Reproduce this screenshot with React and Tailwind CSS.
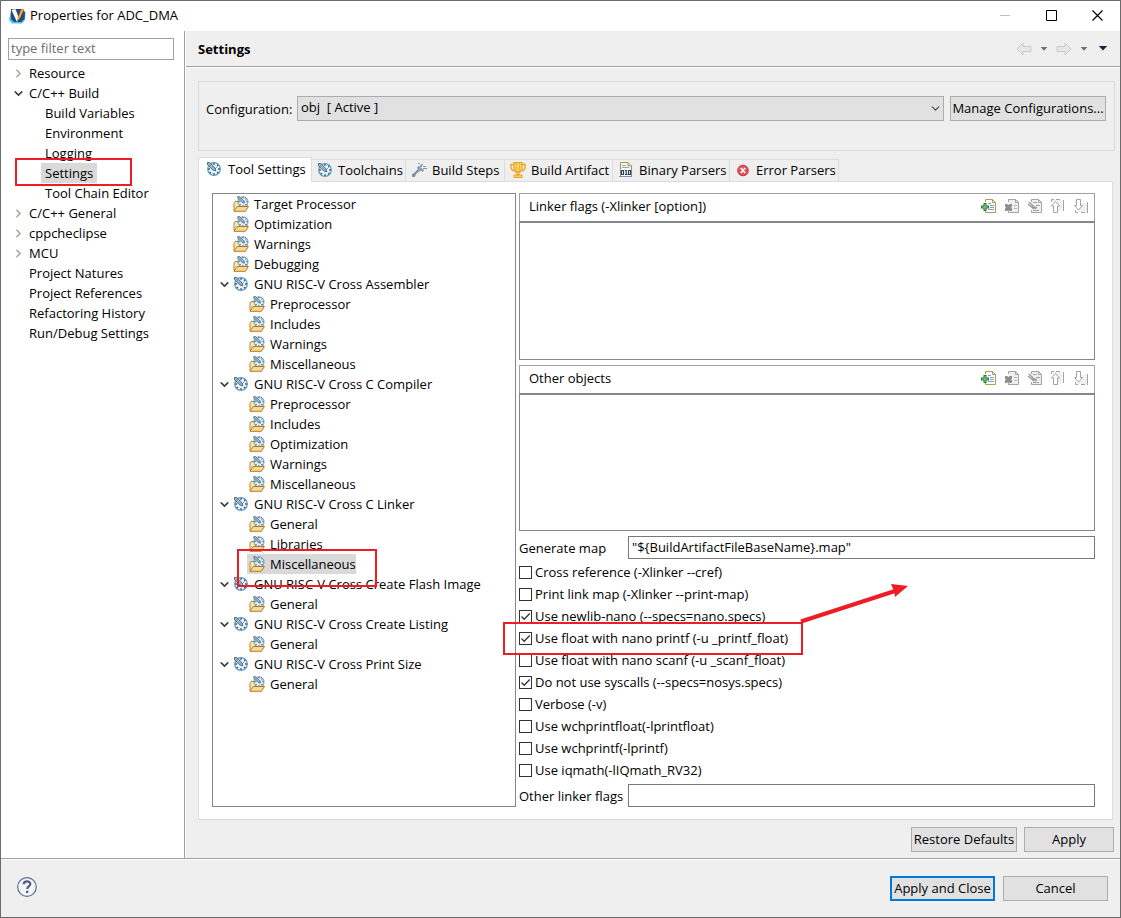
import { ChevronDown, ChevronRight } from "lucide-react";

const pages = [
  { label: "Resource", arrow: "closed" },
  { label: "C/C++ Build", arrow: "open" },
  { label: "Build Variables", child: true },
  { label: "Environment", child: true },
  { label: "Logging", child: true },
  { label: "Settings", child: true, selected: true },
  { label: "Tool Chain Editor", child: true },
  { label: "C/C++ General", arrow: "closed" },
  { label: "cppcheclipse", arrow: "closed" },
  { label: "MCU", arrow: "closed" },
  { label: "Project Natures" },
  { label: "Project References" },
  { label: "Refactoring History" },
  { label: "Run/Debug Settings" },
];

const tools = [
  { label: "Target Processor" },
  { label: "Optimization" },
  { label: "Warnings" },
  { label: "Debugging" },
  { label: "GNU RISC-V Cross Assembler", group: true },
  { label: "Preprocessor", child: true },
  { label: "Includes", child: true },
  { label: "Warnings", child: true },
  { label: "Miscellaneous", child: true },
  { label: "GNU RISC-V Cross C Compiler", group: true },
  { label: "Preprocessor", child: true },
  { label: "Includes", child: true },
  { label: "Optimization", child: true },
  { label: "Warnings", child: true },
  { label: "Miscellaneous", child: true },
  { label: "GNU RISC-V Cross C Linker", group: true },
  { label: "General", child: true },
  { label: "Libraries", child: true },
  { label: "Miscellaneous", child: true, selected: true },
  { label: "GNU RISC-V Cross Create Flash Image", group: true },
  { label: "General", child: true },
  { label: "GNU RISC-V Cross Create Listing", group: true },
  { label: "General", child: true },
  { label: "GNU RISC-V Cross Print Size", group: true },
  { label: "General", child: true },
];

const options = [
  { id: "cref", label: "Cross reference (-Xlinker --cref)" },
  { id: "print-map", label: "Print link map (-Xlinker --print-map)" },
  { id: "nano", label: "Use newlib-nano (--specs=nano.specs)", checked: true },
  { id: "printf", label: "Use float with nano printf (-u _printf_float)", checked: true, marked: true },
  { id: "scanf", label: "Use float with nano scanf (-u _scanf_float)" },
  { id: "nosys", label: "Do not use syscalls (--specs=nosys.specs)", checked: true },
  { id: "verbose", label: "Verbose (-v)" },
  { id: "wchfloat", label: "Use wchprintfloat(-lprintfloat)" },
  { id: "wch", label: "Use wchprintf(-lprintf)" },
  { id: "iqmath", label: "Use iqmath(-lIQmath_RV32)" },
];

const AppLogo = () => (
  <svg width="17" height="16" viewBox="0 0 17 16" aria-hidden="true">
    <path d="M1.500 4 0 12l3 3.500h10l3-3.500 .5-8-3-3z" fill="#49c3ea" />
    <path d="M2 1h12l2 4-.5 6-3.500 3H5L2 11z" fill="#2b4783" />
    <path d="m2.500 2 4-1 3 8-1.500 5z" fill="#fff" />
    <path d="M7.500 14 12 1.500 15.500.5 11 10z" fill="#f5a81c" />
  </svg>
);

const GaugeShape = () => (
  <>
    <circle cx="8" cy="8" r="6.300" fill="#eef6fb" stroke="#5f97bd" strokeWidth="1.200" />
    <path
      d="M8 2v2M8 12v2M2 8h2M12 8h2M12.300 3.700 11 5M12.300 12.300 11 11M3.700 12.300 5 11"
      stroke="#2f6690"
      strokeWidth="1.300"
    />
    <path d="M8 9l3.500-3.500" stroke="#6fa3c6" />
    <path d="M1.500 1.500h2.200L9 6.800l.8 3-3-.8L1.500 3.700z" fill="#a9bfcf" stroke="#3b5a72" strokeWidth="0.900" />
    <path d="m3 3 4.500 4.500" stroke="#3b5a72" strokeWidth="0.800" strokeDasharray="1 1" />
  </>
);

const GaugeIcon = () => (
  <svg width="16" height="16" viewBox="0 0 16 16" fill="none" className="shrink-0" aria-hidden="true">
    <GaugeShape />
  </svg>
);

const FolderIcon = () => (
  <svg width="16" height="16" viewBox="0 0 16 16" fill="none" className="shrink-0" aria-hidden="true">
    <path d="M1 14.500V7l1-1.500h3L6 7h8v3" fill="#fbe8b4" stroke="#b98332" />
    <g transform="translate(3.600 -0.600) scale(0.8)">
      <GaugeShape />
    </g>
    <path d="m1 15.300 3-4.800h11.400l-3 4.800z" fill="#f9d98f" stroke="#b07a2a" />
  </svg>
);

const StepsIcon = () => (
  <svg width="16" height="16" viewBox="0 0 16 16" aria-hidden="true">
    <path d="m1 12 2-1 5-5 2 2-5 4-1 3-3 0z" fill="#7b93a8" />
    <path d="m6 5 2-1 5 4-1 2-2-1-3-1z" fill="#8b9fb0" />
    <path d="M7 1h2v1H7zM10 2h2v1h-2zM12 4h3v1h-3zM9 3h2v2H9zM12 6h2v1h-2zM14 6h2v1h-2z" fill="#7f98ad" />
  </svg>
);

const TrophyIcon = () => (
  <svg width="16" height="16" viewBox="0 0 16 16" fill="none" aria-hidden="true">
    <path d="M4 2.500H1V6l1.500 2.500H5M12 2.500h3V6l-1.500 2.500H11" stroke="#e9a526" strokeWidth="1.400" />
    <path d="M4 .7h8v7L10 10H6L4 7.700z" fill="#fbd36b" stroke="#e9a526" strokeWidth="1.300" />
    <path d="M6.500 1v8M9.500 1v8" stroke="#eeb43d" />
    <path d="M7 10h2v3H7zM4 13h8v2.500H4z" fill="#fbd36b" stroke="#e9a526" />
  </svg>
);

const BinaryIcon = () => (
  <svg width="16" height="16" viewBox="0 0 16 16" fill="none" aria-hidden="true">
    <path d="M2.500 15V.5H10L13.500 4v11" fill="#fdfcf3" stroke="#a4925a" />
    <path d="M10 .5V4h3.500" fill="#ecd99a" stroke="#a4925a" />
    <path d="M4 3.500h4M4 5.500h7" stroke="#86a8cb" />
    <path d="M1 14.500h13" stroke="#7890b0" />
    <path d="M3.500 8.500h2v4h-2zM10.500 8.500h2v4h-2zM7 8.500h1.200v4M7 12.500h2.500" stroke="#24406e" strokeWidth="1.200" />
  </svg>
);

const ErrorIcon = () => (
  <svg width="16" height="16" viewBox="0 0 16 16" fill="none" aria-hidden="true">
    <circle cx="8" cy="8.500" r="5.300" fill="#e0525c" stroke="#c8323f" />
    <path d="m5.800 6 4.400 5M10.200 6l-4.400 5" stroke="#fff" strokeWidth="1.700" />
  </svg>
);

const tabs = [
  { label: "Toolchains", icon: <GaugeIcon />, width: "w-[94px]" },
  { label: "Build Steps", icon: <StepsIcon />, width: "w-[99px]" },
  { label: "Build Artifact", icon: <TrophyIcon />, width: "w-[108px]" },
  { label: "Binary Parsers", icon: <BinaryIcon />, width: "w-[117px]" },
  { label: "Error Parsers", icon: <ErrorIcon />, width: "w-[109px]" },
];

const Sheet = ({ color = "#a3a3a3", fill = "#efefef" }) => (
  <>
    <path d="M4.500 4V1.500h7l3 3v10h-10V12" fill={fill} stroke={color} />
    <path d="M11.500 1.500v3h3" stroke={color} />
  </>
);

const listActions = [
  {
    label: "Add",
    drawing: (
      <>
        <Sheet color="#b09a55" fill="#fff" />
        <path d="M7 5.500h3M9 7.500h4M9 9.500h4M7 11.500h6" stroke="#7c9fd0" />
        <path d="M2.500 5h3v2.500H8v3H5.500V13h-3v-2.500H0v-3h2.500z" fill="#237a35" />
        <path d="M4 6v6M1 9h6" stroke="#8ad486" />
      </>
    ),
  },
  {
    label: "Delete",
    drawing: (
      <>
        <Sheet />
        <path d="M10 7.500h3M10 10.500h3" stroke="#b5b5b5" />
        <path d="M1 6h2l1.500 1L6 6h2v2.500L7 9.500l1 1V13H6l-1.500-1L3 13H1v-2.500l1-1-1-1z" fill="#8e8e8e" />
      </>
    ),
  },
  {
    label: "Edit",
    drawing: (
      <>
        <Sheet />
        <path d="M6 4.500h4M9 7.500h4M6 12.500h6" stroke="#a3a3a3" />
        <path d="m2 4 7 7M1 6l6 5M5 9.500h5" stroke="#9a9a9a" strokeWidth="1.400" />
      </>
    ),
  },
  {
    label: "Move up",
    drawing: (
      <>
        <path d="M3 2h9v11H6z" fill="#f0f0f0" />
        <path d="M1.500 4V1.500H4M6 1.500h4M13.500 2v11" stroke="#a3a3a3" />
        <path d="M5.500 3.500 9.500 8h-2v6.500h-4V8h-2z" fill="#fff" stroke="#a3a3a3" />
      </>
    ),
  },
  {
    label: "Move down",
    drawing: (
      <>
        <path d="M6 5h8v9H4z" fill="#f0f0f0" />
        <path d="M14.500 4v11M2.500 12v2.500H5M8 14.500h4" stroke="#a3a3a3" />
        <path d="M3.500 1.500h4v6h2L5.500 12l-4-4.500h2z" fill="#fff" stroke="#a3a3a3" />
      </>
    ),
  },
];

const Mark = ({ className }) => (
  <span className={`pointer-events-none absolute z-10 border-2 border-[#ee1c24] ${className}`} />
);

const PageTree = () => (
  <ul className="mt-[3px]">
    {pages.map((page) => (
      <li key={page.label} className="relative flex h-5 items-center">
        <span className={`flex shrink-0 justify-end ${page.child ? "w-10" : "w-6"}`}>
          {page.arrow === "open" && <ChevronDown size={13} strokeWidth={3} className="text-[#404040]" />}
          {page.arrow === "closed" && <ChevronRight size={13} strokeWidth={3} className="text-[#a6a6a6]" />}
        </span>
        <a href="#page" className={`px-1 leading-5 ${page.selected ? "bg-[#d9d9d9]" : ""}`}>
          {page.label}
        </a>
        {page.selected && <Mark className="-top-[5px] left-3.5 h-7 w-[117px]" />}
      </li>
    ))}
  </ul>
);

const ToolTree = () => (
  <ul className="w-[304px] shrink-0 border border-[#828790] bg-white">
    {tools.map((tool, index) => (
      <li key={index} className={`relative flex h-5 items-center ${tool.child ? "pl-[34px]" : "pl-[18px]"}`}>
        {tool.group && (
          <ChevronDown size={13} strokeWidth={3} className="absolute left-[5px] text-[#404040]" />
        )}
        <a
          href="#tool"
          className={`flex items-center gap-[5px] whitespace-nowrap pl-0.5 leading-5 ${tool.selected ? "bg-[#d9d9d9]" : ""}`}
        >
          {tool.group ? <GaugeIcon /> : <FolderIcon />}
          {tool.label}
        </a>
        {tool.selected && <Mark className="-top-[5px] left-6 h-[38px] w-[140px]" />}
      </li>
    ))}
  </ul>
);

const ListBox = ({ title }) => (
  <section className="flex min-h-24 flex-1 flex-col">
    <div className="flex h-7 items-center border border-b-0 border-[#a0a0a0] pb-[3px] pl-[9px] pr-[5px]">
      <h2 className="flex-1">{title}</h2>
      <div className="flex gap-[7px]">
        {listActions.map((action) => (
          <button key={action.label} type="button" aria-label={action.label}>
            <svg width="16" height="16" viewBox="0 0 16 16" fill="none">
              {action.drawing}
            </svg>
          </button>
        ))}
      </div>
    </div>
    <div className="flex-1 border border-t-2 border-[#828790]" />
  </section>
);

const TextField = ({ id, label, value }) => (
  <div className="flex h-[23px] items-center">
    <label htmlFor={id} className="w-[109px] shrink-0 whitespace-nowrap">
      {label}
    </label>
    <input
      id={id}
      defaultValue={value}
      className="h-full min-w-0 flex-1 border border-[#7a7a7a] bg-white px-[3px] pb-0.5"
    />
  </div>
);

const Option = ({ option }) => (
  <div className="relative flex h-[22px] items-center">
    <input
      id={option.id}
      type="checkbox"
      defaultChecked={option.checked}
      className="peer size-[13px] appearance-none border border-[#333] bg-white"
    />
    <svg
      viewBox="0 0 13 13"
      fill="none"
      className="pointer-events-none absolute left-0 hidden size-[13px] peer-checked:block"
    >
      <path d="m2.500 6.500 2.700 2.700L10.700 3.500" stroke="#333" strokeWidth="1.300" />
    </svg>
    <label htmlFor={option.id} className="pl-[3px]">
      {option.label}
    </label>
    {option.marked && (
      <>
        <Mark className="-left-4 -top-[5px] h-[33px] w-[300px]" />
        <svg width="110" height="42" viewBox="0 0 110 42" className="absolute -top-[45px] left-[281px] z-10">
          <path d="M1 39.500 95 9" stroke="#ee1c24" strokeWidth="4" />
          <path d="m91 2 17 2-13 11-1-6z" fill="#ee1c24" />
        </svg>
      </>
    )}
  </div>
);

const Button = ({ children, className = "", primary }) => (
  <button
    type="button"
    className={`h-[25px] shrink-0 whitespace-nowrap bg-[#e1e1e1] pb-0.5 text-center leading-5 ${primary ? "border-2 border-[#0078d7]" : "border border-[#adadad]"} ${className}`}
  >
    {children}
  </button>
);

const NavArrow = ({ label, flip }) => (
  <button type="button" aria-label={label}>
    <svg width="16" height="14" viewBox="0 0 16 14" className={flip ? "rotate-180" : ""}>
      <path d="M1 7 7 1v3.500h8v5H7V13z" fill="#e6e6e6" stroke="#cacaca" strokeLinejoin="round" />
    </svg>
  </button>
);

const Caret = ({ label, className }) => (
  <button type="button" aria-label={label}>
    <svg width="10" height="6" viewBox="0 0 10 6" className={className}>
      <path d="M0 0h10L5 5.500z" fill="currentColor" />
    </svg>
  </button>
);

const App = () => {
  return (
    <div className="flex min-h-screen flex-col border border-[#6b6b6b] bg-[#efefef] font-['Open_Sans','Noto_Sans',sans-serif] text-[13px] leading-5 text-black">
      <header className="flex h-[30px] items-center bg-white pl-2">
        <AppLogo />
        <h1 className="flex-1 pb-0.5 pl-1">Properties for ADC_DMA</h1>
        <div className="flex items-center">
          <button type="button" aria-label="Minimize" className="flex w-[46px] justify-center">
            <svg width="10" height="10" viewBox="0 0 10 10">
              <path d="M0 4.500h10" stroke="#bdbdbd" />
            </svg>
          </button>
          <button type="button" aria-label="Maximize" className="flex w-[46px] justify-center pb-0.5">
            <svg width="11" height="11" viewBox="0 0 11 11" fill="none">
              <path d="M.5.5h10v10H.5z" stroke="#000" />
            </svg>
          </button>
          <button type="button" aria-label="Close" className="flex w-[46px] justify-center pb-0.5">
            <svg width="11" height="11" viewBox="0 0 11 11">
              <path d="m.5.5 10 10M10.500.5l-10 10" stroke="#000" strokeWidth="1.200" />
            </svg>
          </button>
        </div>
      </header>

      <div className="flex flex-1">
        <aside className="w-[184px] shrink-0 border-r border-[#a0a0a0] bg-white pt-[7px]">
          <div className="px-[7px]">
            <input
              aria-label="Filter"
              placeholder="type filter text"
              className="block h-[22px] w-[166px] border border-[#a0a0a0] px-0.5 pb-0.5 placeholder:text-[#6d6d6d]"
            />
          </div>
          <PageTree />
        </aside>

        <main className="flex min-w-0 flex-1 flex-col border-l border-white">
          <div className="flex h-9 items-center border-b border-[#a0a0a0] px-3">
            <h2 className="flex-1 font-bold">Settings</h2>
            <div className="flex items-center gap-2">
              <NavArrow label="Back" />
              <Caret label="Back history" className="h-1 w-2 text-[#6e6e6e]" />
              <NavArrow label="Forward" flip />
              <Caret label="Forward history" className="h-1 w-2 text-[#6e6e6e]" />
              <Caret label="Menu" className="ml-0.5 h-[5px] w-[10px] text-[#2a1a4a]" />
            </div>
          </div>

          <div className="flex flex-1 flex-col border-t border-white pb-1.5 pl-3 pr-[5px] pt-[13px]">
            <div className="flex items-center border border-[#dcdcdc] pb-[29px] pl-[7px] pr-2 pt-3.5">
              <label htmlFor="configuration" className="w-[91px] shrink-0">
                Configuration:
              </label>
              <div className="relative min-w-0 flex-1">
                <select
                  id="configuration"
                  className="block h-[25px] w-full appearance-none border border-[#adadad] bg-[#e1e1e1] pb-[3px] pl-[3px]"
                >
                  <option>obj&nbsp; [ Active ]</option>
                </select>
                <ChevronDown size={13} className="pointer-events-none absolute right-0.5 top-1.5 text-[#444]" />
              </div>
              <Button className="ml-1.5 w-[156px]">Manage Configurations...</Button>
            </div>

            <div className="mr-0.5 mt-1.5 flex items-end">
              <button
                type="button"
                className="relative -mb-px flex h-[25px] w-[114px] items-center gap-1.5 whitespace-nowrap border border-b-0 border-[#dcdcdc] bg-white pb-[3px] pl-[7px]"
              >
                <GaugeIcon />
                Tool Settings
              </button>
              {tabs.map((tab) => (
                <button
                  key={tab.label}
                  type="button"
                  className={`flex h-[22px] shrink-0 items-center gap-[5px] whitespace-nowrap border-r border-t border-[#dcdcdc] pb-px pl-[5px] ${tab.width}`}
                >
                  {tab.icon}
                  {tab.label}
                </button>
              ))}
            </div>

            <div className="mr-0.5 flex flex-1 gap-[3px] border border-[#dcdcdc] bg-white pb-3 pl-[13px] pr-[17px] pt-[11px]">
              <ToolTree />
              <div className="flex min-w-0 flex-1 flex-col">
                <div className="flex flex-1 flex-col gap-[5px]">
                  <ListBox title="Linker flags (-Xlinker [option])" />
                  <ListBox title="Other objects" />
                </div>
                <div className="mt-[5px]">
                  <TextField id="map" label="Generate map" value={'"${BuildArtifactFileBaseName}.map"'} />
                </div>
                <div className="mb-[3px] mt-0.5">
                  {options.map((option) => (
                    <Option key={option.id} option={option} />
                  ))}
                </div>
                <TextField id="flags" label="Other linker flags" />
              </div>
            </div>

            <div className="mt-[7px] flex justify-end gap-[7px] pr-px">
              <Button className="w-[106px]">Restore Defaults</Button>
              <Button className="w-[90px]">Apply</Button>
            </div>
          </div>
        </main>
      </div>

      <footer className="border-t border-[#a0a0a0]">
        <div className="flex items-center gap-2 border-t border-white px-3 py-4">
          <div className="flex flex-1 pb-[3px] pl-1">
            <button type="button" aria-label="Help">
              <svg width="20" height="20" viewBox="0 0 20 20" fill="none">
                <circle cx="10" cy="10" r="9.300" fill="#f4f5f8" stroke="#5a6c94" strokeWidth="1.200" />
                <path d="M6.700 7.200C6.900 3.500 13.300 3.600 13.300 7c0 2.300-3.100 2.400-3.100 5" stroke="#4c5f8c" strokeWidth="2.200" />
                <path d="M9 13.800h2.300v2.200H9z" fill="#4c5f8c" />
              </svg>
            </button>
          </div>
          <Button primary className="w-[105px]">
            Apply and Close
          </Button>
          <Button className="w-[105px]">Cancel</Button>
        </div>
      </footer>
    </div>
  );
};

export default App;
